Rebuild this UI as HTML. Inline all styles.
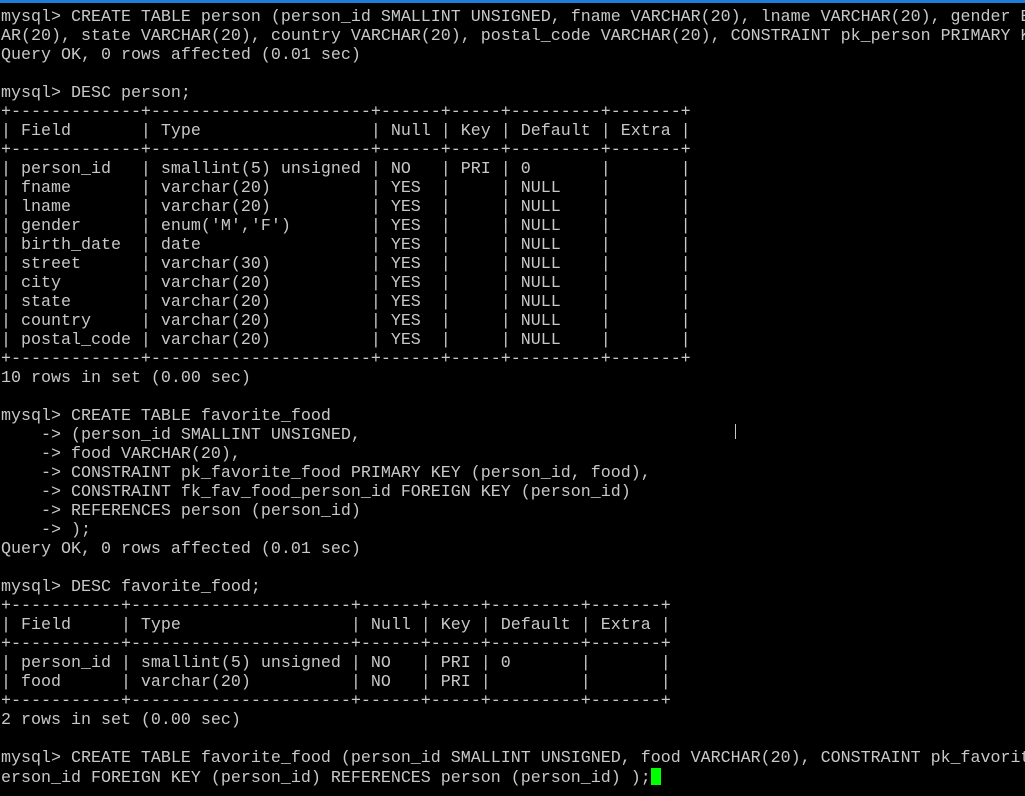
<!DOCTYPE html>
<html><head><meta charset="utf-8"><style>
html,body{margin:0;padding:0;background:#000;width:1025px;height:796px;overflow:hidden}
.bar{position:absolute;left:0;top:0;width:1025px;height:3px;background:#1f7fd6}
pre{position:absolute;left:1px;top:8px;margin:0;font-family:"Liberation Mono",monospace;font-size:16.67px;line-height:19px;color:#c8c8c8;white-space:pre}
.cur{display:inline-block;width:10px;height:17px;background:#00ff00;vertical-align:-3px}
.ib{position:absolute;left:735px;top:424px;width:1px;height:15px;background:#c8c8c8}
</style></head><body><div class="bar"></div><div class="ib"></div>
<pre>mysql&gt; CREATE TABLE person (person_id SMALLINT UNSIGNED, fname VARCHAR(20), lname VARCHAR(20), gender ENUM
AR(20), state VARCHAR(20), country VARCHAR(20), postal_code VARCHAR(20), CONSTRAINT pk_person PRIMARY KEY
Query OK, 0 rows affected (0.01 sec)

mysql&gt; DESC person;
+-------------+----------------------+------+-----+---------+-------+
| Field       | Type                 | Null | Key | Default | Extra |
+-------------+----------------------+------+-----+---------+-------+
| person_id   | smallint(5) unsigned | NO   | PRI | 0       |       |
| fname       | varchar(20)          | YES  |     | NULL    |       |
| lname       | varchar(20)          | YES  |     | NULL    |       |
| gender      | enum('M','F')        | YES  |     | NULL    |       |
| birth_date  | date                 | YES  |     | NULL    |       |
| street      | varchar(30)          | YES  |     | NULL    |       |
| city        | varchar(20)          | YES  |     | NULL    |       |
| state       | varchar(20)          | YES  |     | NULL    |       |
| country     | varchar(20)          | YES  |     | NULL    |       |
| postal_code | varchar(20)          | YES  |     | NULL    |       |
+-------------+----------------------+------+-----+---------+-------+
10 rows in set (0.00 sec)

mysql&gt; CREATE TABLE favorite_food
    -&gt; (person_id SMALLINT UNSIGNED,
    -&gt; food VARCHAR(20),
    -&gt; CONSTRAINT pk_favorite_food PRIMARY KEY (person_id, food),
    -&gt; CONSTRAINT fk_fav_food_person_id FOREIGN KEY (person_id)
    -&gt; REFERENCES person (person_id)
    -&gt; );
Query OK, 0 rows affected (0.01 sec)

mysql&gt; DESC favorite_food;
+-----------+----------------------+------+-----+---------+-------+
| Field     | Type                 | Null | Key | Default | Extra |
+-----------+----------------------+------+-----+---------+-------+
| person_id | smallint(5) unsigned | NO   | PRI | 0       |       |
| food      | varchar(20)          | NO   | PRI |         |       |
+-----------+----------------------+------+-----+---------+-------+
2 rows in set (0.00 sec)

mysql&gt; CREATE TABLE favorite_food (person_id SMALLINT UNSIGNED, food VARCHAR(20), CONSTRAINT pk_favorite_
erson_id FOREIGN KEY (person_id) REFERENCES person (person_id) );<span class="cur"></span></pre>
</body></html>
